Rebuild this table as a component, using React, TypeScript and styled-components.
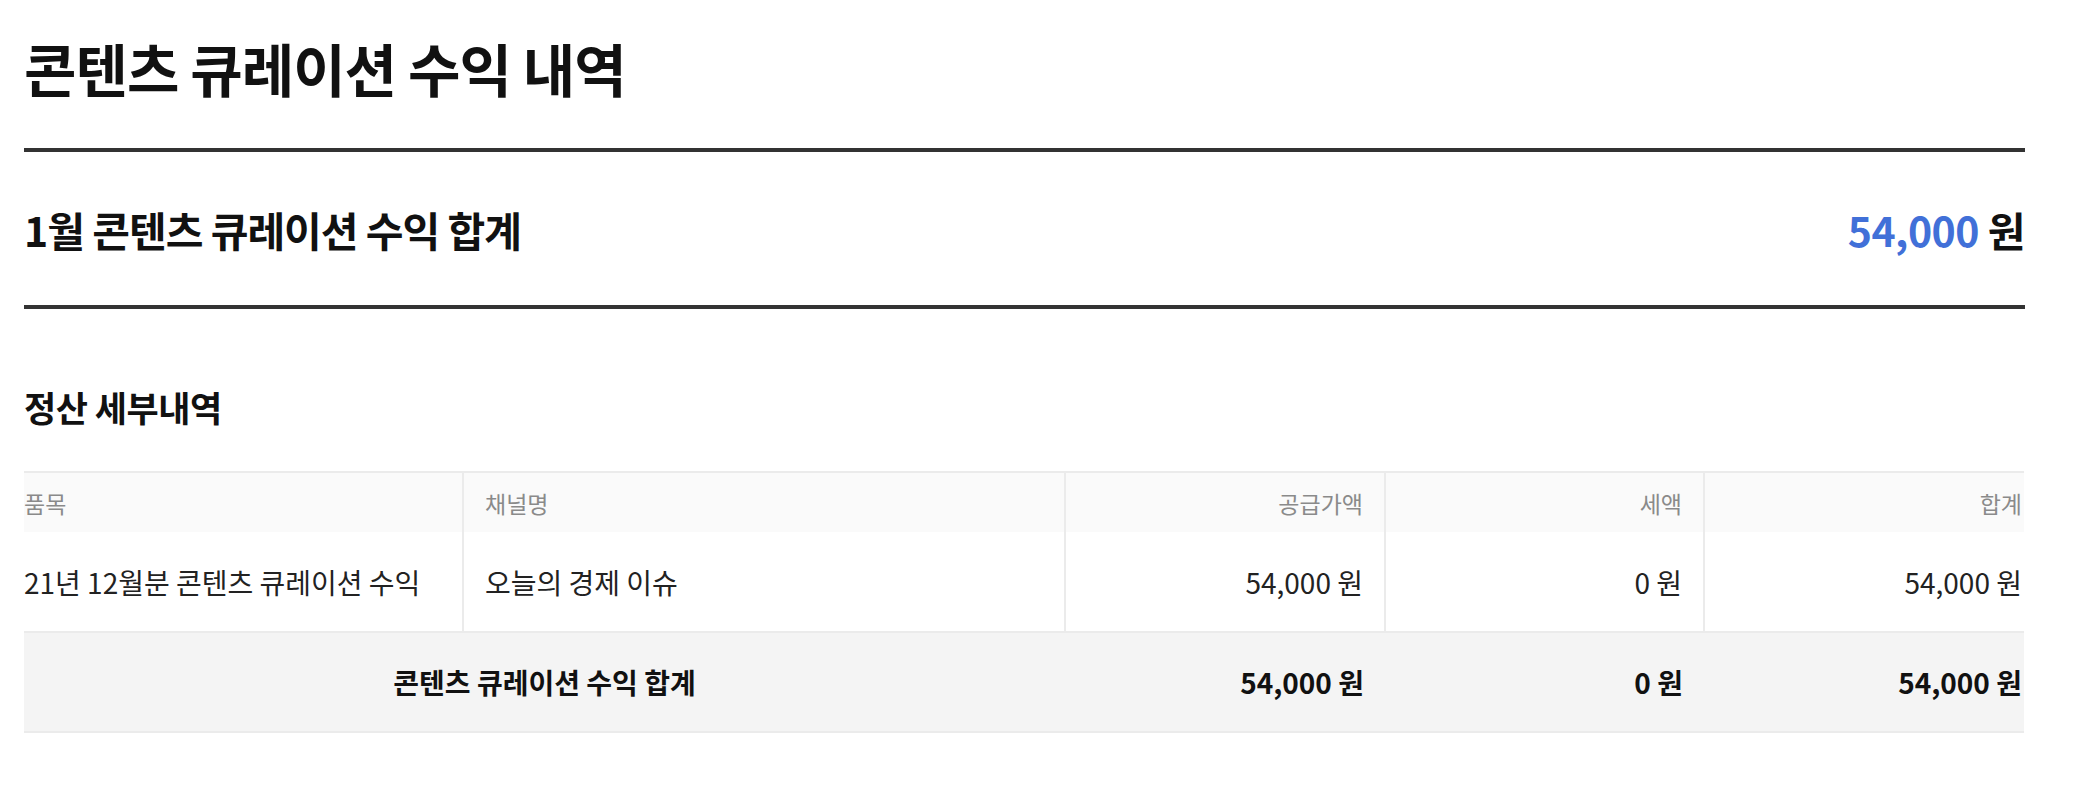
import styled, { createGlobalStyle } from "styled-components";

const GlobalStyle = createGlobalStyle`
  html, body {
    margin: 0;
    padding: 0;
    background: #fff;
  }
  body {
    font-family: "Noto Sans CJK KR", "Noto Sans", sans-serif;
    color: #111;
  }
`;

const Page = styled.div`
  width: 2001px;
  margin-left: 24px;
  padding-top: 32px;
`;

const Title = styled.h1`
  margin: 0 0 46px;
  font-size: 57px;
  line-height: 70px;
  font-weight: 700;
  letter-spacing: -1px;
  color: #111;
`;

const Summary = styled.div`
  display: flex;
  align-items: center;
  justify-content: space-between;
  height: 153px;
  border-top: 4px solid #333;
  border-bottom: 4px solid #333;
`;

const SummaryLabel = styled.h2`
  margin: 0;
  font-size: 41px;
  font-weight: 700;
  letter-spacing: -1px;
  color: #111;
`;

const SummaryAmount = styled.div`
  font-size: 41px;
  font-weight: 700;
  color: #111;
  letter-spacing: -0.5px;
`;

const Highlight = styled.span`
  color: #4170d8;
`;

const SectionTitle = styled.h3`
  margin: 76px 0 42px;
  font-size: 35px;
  line-height: 44px;
  font-weight: 700;
  letter-spacing: -0.5px;
  color: #111;
`;

const Table = styled.table`
  width: 2000px;
  border-collapse: collapse;
  table-layout: fixed;
  border-top: 2px solid #ebebeb;
`;

const HeadRow = styled.tr`
  background: #fafafa;
  height: 60px;
`;

const BodyRow = styled.tr`
  height: 100px;
  border-bottom: 2px solid #ebebeb;
`;

const TotalRow = styled.tr`
  height: 100px;
  background: #f4f4f4;
  border-bottom: 2px solid #ebebeb;
`;

const HeadCell = styled.th<{ $align?: "left" | "right" }>`
  padding: 0 21px;
  text-align: ${(p) => p.$align ?? "left"};
  font-size: 23px;
  font-weight: 400;
  color: #8a8a8a;
  border-left: 2px solid #ebebeb;
  vertical-align: middle;

  &:first-child {
    padding-left: 0;
    border-left: none;
  }
  &:last-child {
    padding-right: 2px;
  }
`;

const Cell = styled.td<{ $align?: "left" | "right" }>`
  padding: 0 21px;
  text-align: ${(p) => p.$align ?? "left"};
  font-size: 28px;
  color: #222;
  border-left: 2px solid #ebebeb;
  vertical-align: middle;
  white-space: nowrap;

  &:first-child {
    padding-left: 0;
    border-left: none;
  }
  &:last-child {
    padding-right: 2px;
  }
`;

const TotalCell = styled.td<{ $align?: "center" | "right" }>`
  padding: 0 21px;
  text-align: ${(p) => p.$align ?? "right"};
  font-size: 28px;
  font-weight: 700;
  color: #111;
  vertical-align: middle;
  white-space: nowrap;

  &:last-child {
    padding-right: 2px;
  }
`;

const columns = [439, 602, 320, 319, 320];

const rows = [
  {
    item: "21년 12월분 콘텐츠 큐레이션 수익",
    channel: "오늘의 경제 이슈",
    supply: 54000,
    tax: 0,
  },
];

const won = (n: number) => `${n.toLocaleString("en-US")} 원`;

export default function App() {
  const supplyTotal = rows.reduce((s, r) => s + r.supply, 0);
  const taxTotal = rows.reduce((s, r) => s + r.tax, 0);

  return (
    <>
      <GlobalStyle />
      <Page>
        <Title>콘텐츠 큐레이션 수익 내역</Title>
        <Summary>
          <SummaryLabel>1월 콘텐츠 큐레이션 수익 합계</SummaryLabel>
          <SummaryAmount>
            <Highlight>{(supplyTotal + taxTotal).toLocaleString("en-US")}</Highlight> 원
          </SummaryAmount>
        </Summary>

        <SectionTitle>정산 세부내역</SectionTitle>
        <Table>
          <colgroup>
            {columns.map((w, i) => (
              <col key={i} style={{ width: w }} />
            ))}
          </colgroup>
          <thead>
            <HeadRow>
              <HeadCell>품목</HeadCell>
              <HeadCell>채널명</HeadCell>
              <HeadCell $align="right">공급가액</HeadCell>
              <HeadCell $align="right">세액</HeadCell>
              <HeadCell $align="right">합계</HeadCell>
            </HeadRow>
          </thead>
          <tbody>
            {rows.map((r) => (
              <BodyRow key={r.item}>
                <Cell>{r.item}</Cell>
                <Cell>{r.channel}</Cell>
                <Cell $align="right">{won(r.supply)}</Cell>
                <Cell $align="right">{won(r.tax)}</Cell>
                <Cell $align="right">{won(r.supply + r.tax)}</Cell>
              </BodyRow>
            ))}
            <TotalRow>
              <TotalCell colSpan={2} $align="center">
                콘텐츠 큐레이션 수익 합계
              </TotalCell>
              <TotalCell>{won(supplyTotal)}</TotalCell>
              <TotalCell>{won(taxTotal)}</TotalCell>
              <TotalCell>{won(supplyTotal + taxTotal)}</TotalCell>
            </TotalRow>
          </tbody>
        </Table>
      </Page>
    </>
  );
}
